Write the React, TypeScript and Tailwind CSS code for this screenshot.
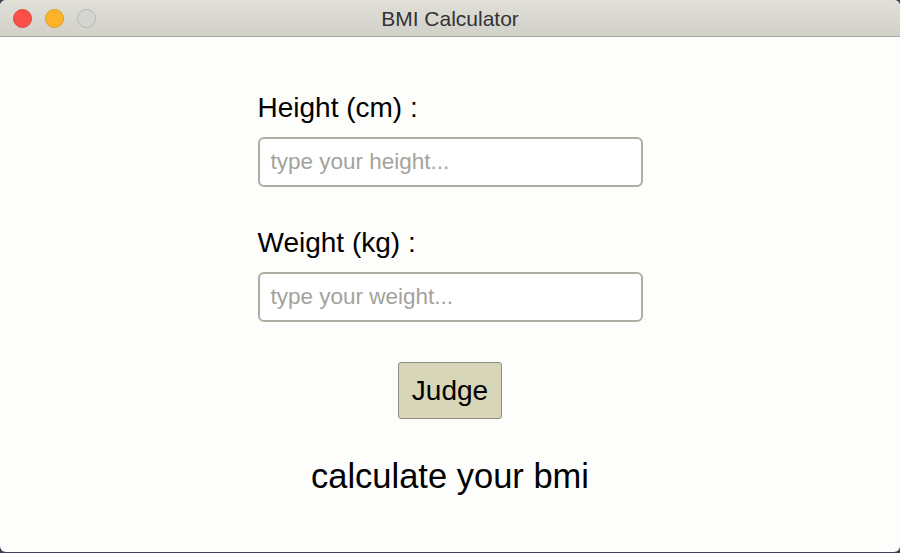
import React from "react";

export default function App() {
  const font = { fontFamily: '"Liberation Sans", Arial, sans-serif' };
  return (
    <div className="w-[900px] h-[553px] bg-[#3a4150] overflow-hidden" style={font}>
      <div className="w-[900px] h-[552px] rounded-[6px] overflow-hidden flex flex-col bg-[#fdfdfb]">
        <div className="relative h-[37px] shrink-0 bg-gradient-to-b from-[#e0dfd8] to-[#d2d1c9] border-b border-[#a9a89f] flex items-center justify-center">
          <div className="absolute left-[13px] top-[9px] flex gap-[13px]">
            <div className="w-[19px] h-[19px] rounded-full bg-[#fb5048] border border-[#e0443c]" />
            <div className="w-[19px] h-[19px] rounded-full bg-[#fdb42a] border border-[#e09d20]" />
            <div className="w-[19px] h-[19px] rounded-full bg-[#d6d5d0] border border-[#b8b7b8]" />
          </div>
          <span className="text-[21px] text-[#333333] mt-[1px]">BMI Calculator</span>
        </div>
        <div className="flex-1 flex flex-col items-center">
          <div className="w-[385px] mt-[55px]">
            <div className="text-[28px] leading-[32px] text-black">Height (cm) :</div>
            <div className="mt-[13px] h-[50px] rounded-[6px] border-2 border-[#aeada2] bg-white flex items-center px-[11px]">
              <span className="text-[22.5px] text-[#a3a39c]">type your height...</span>
            </div>
            <div className="mt-[40px] text-[28px] leading-[32px] text-black">Weight (kg) :</div>
            <div className="mt-[13px] h-[50px] rounded-[6px] border-2 border-[#aeada2] bg-white flex items-center px-[11px]">
              <span className="text-[22.5px] text-[#a3a39c]">type your weight...</span>
            </div>
          </div>
          <div className="mt-[40px] w-[104px] h-[57px] rounded-[3px] border border-[#8f8e80] bg-[#d7d6b8] flex items-center justify-center">
            <span className="text-[28px] text-black">Judge</span>
          </div>
          <div className="mt-[37px] text-[34.5px] leading-[40px] text-black">calculate your bmi</div>
        </div>
      </div>
    </div>
  );
}
